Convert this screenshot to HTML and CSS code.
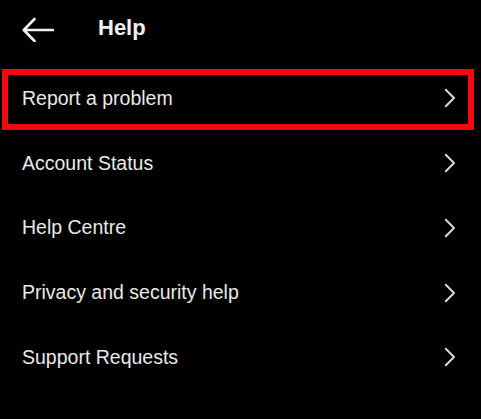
FILE: index.html
```html
<!DOCTYPE html>
<html lang="en">
<head>
<meta charset="utf-8">
<title>Help</title>
<link rel="stylesheet" href="styles.css">
</head>
<body>
<div class="screen">
  <header class="topbar">
    <svg class="back" width="32" height="28" viewBox="0 0 32 28" aria-hidden="true">
      <path d="M31 16 H2.5 M12.5 5 L1.8 16 L12.5 27" fill="none" stroke="#f2f2f2" stroke-width="2.6" stroke-linecap="round" stroke-linejoin="round"/>
    </svg>
    <h1 class="title">Help</h1>
  </header>
  <ul class="menu">
    <li class="item highlighted"><span class="label">Report a problem</span><svg class="chev" width="12" height="20" viewBox="0 0 12 20"><path d="M1.8 1.8 L10 10 L1.8 18.2" fill="none" stroke="#d9d9d9" stroke-width="2" stroke-linecap="round" stroke-linejoin="round"/></svg></li>
    <li class="item"><span class="label">Account Status</span><svg class="chev" width="12" height="20" viewBox="0 0 12 20"><path d="M1.8 1.8 L10 10 L1.8 18.2" fill="none" stroke="#d9d9d9" stroke-width="2" stroke-linecap="round" stroke-linejoin="round"/></svg></li>
    <li class="item"><span class="label">Help Centre</span><svg class="chev" width="12" height="20" viewBox="0 0 12 20"><path d="M1.8 1.8 L10 10 L1.8 18.2" fill="none" stroke="#d9d9d9" stroke-width="2" stroke-linecap="round" stroke-linejoin="round"/></svg></li>
    <li class="item"><span class="label">Privacy and security help</span><svg class="chev" width="12" height="20" viewBox="0 0 12 20"><path d="M1.8 1.8 L10 10 L1.8 18.2" fill="none" stroke="#d9d9d9" stroke-width="2" stroke-linecap="round" stroke-linejoin="round"/></svg></li>
    <li class="item"><span class="label">Support Requests</span><svg class="chev" width="12" height="20" viewBox="0 0 12 20"><path d="M1.8 1.8 L10 10 L1.8 18.2" fill="none" stroke="#d9d9d9" stroke-width="2" stroke-linecap="round" stroke-linejoin="round"/></svg></li>
  </ul>
</div>
</body>
</html>
```
FILE: styles.css
```css
html, body {
  margin: 0;
  padding: 0;
  background: #000;
}

body {
  font-family: "Liberation Sans", Arial, sans-serif;
  color: #ebebeb;
  width: 481px;
  height: 419px;
  overflow: hidden;
}

.screen {
  display: flex;
  flex-direction: column;
}

.topbar {
  display: flex;
  align-items: center;
  height: 55px;
  margin-bottom: 11px;
  padding-left: 22px;
}

.back {
  display: block;
  flex: none;
}

.title {
  margin: 0 0 0 44px;
  font-size: 22px;
  font-weight: bold;
  color: #f0f0f0;
  line-height: normal;
}

.menu {
  list-style: none;
  margin: 0;
  padding: 0;
}

.item {
  position: relative;
  display: flex;
  align-items: center;
  justify-content: space-between;
  height: 64.75px;
  padding: 0 25px 0 22px;
  box-sizing: border-box;
}

.label {
  font-size: 19.5px;
  line-height: normal;
  color: #e9e9e9;
}

.chev {
  display: block;
  flex: none;
}

.highlighted::after {
  content: "";
  position: absolute;
  top: 3px;
  bottom: 1px;
  left: 2px;
  right: 7px;
  border: 6px solid #f20a0f;
  pointer-events: none;
}
```
